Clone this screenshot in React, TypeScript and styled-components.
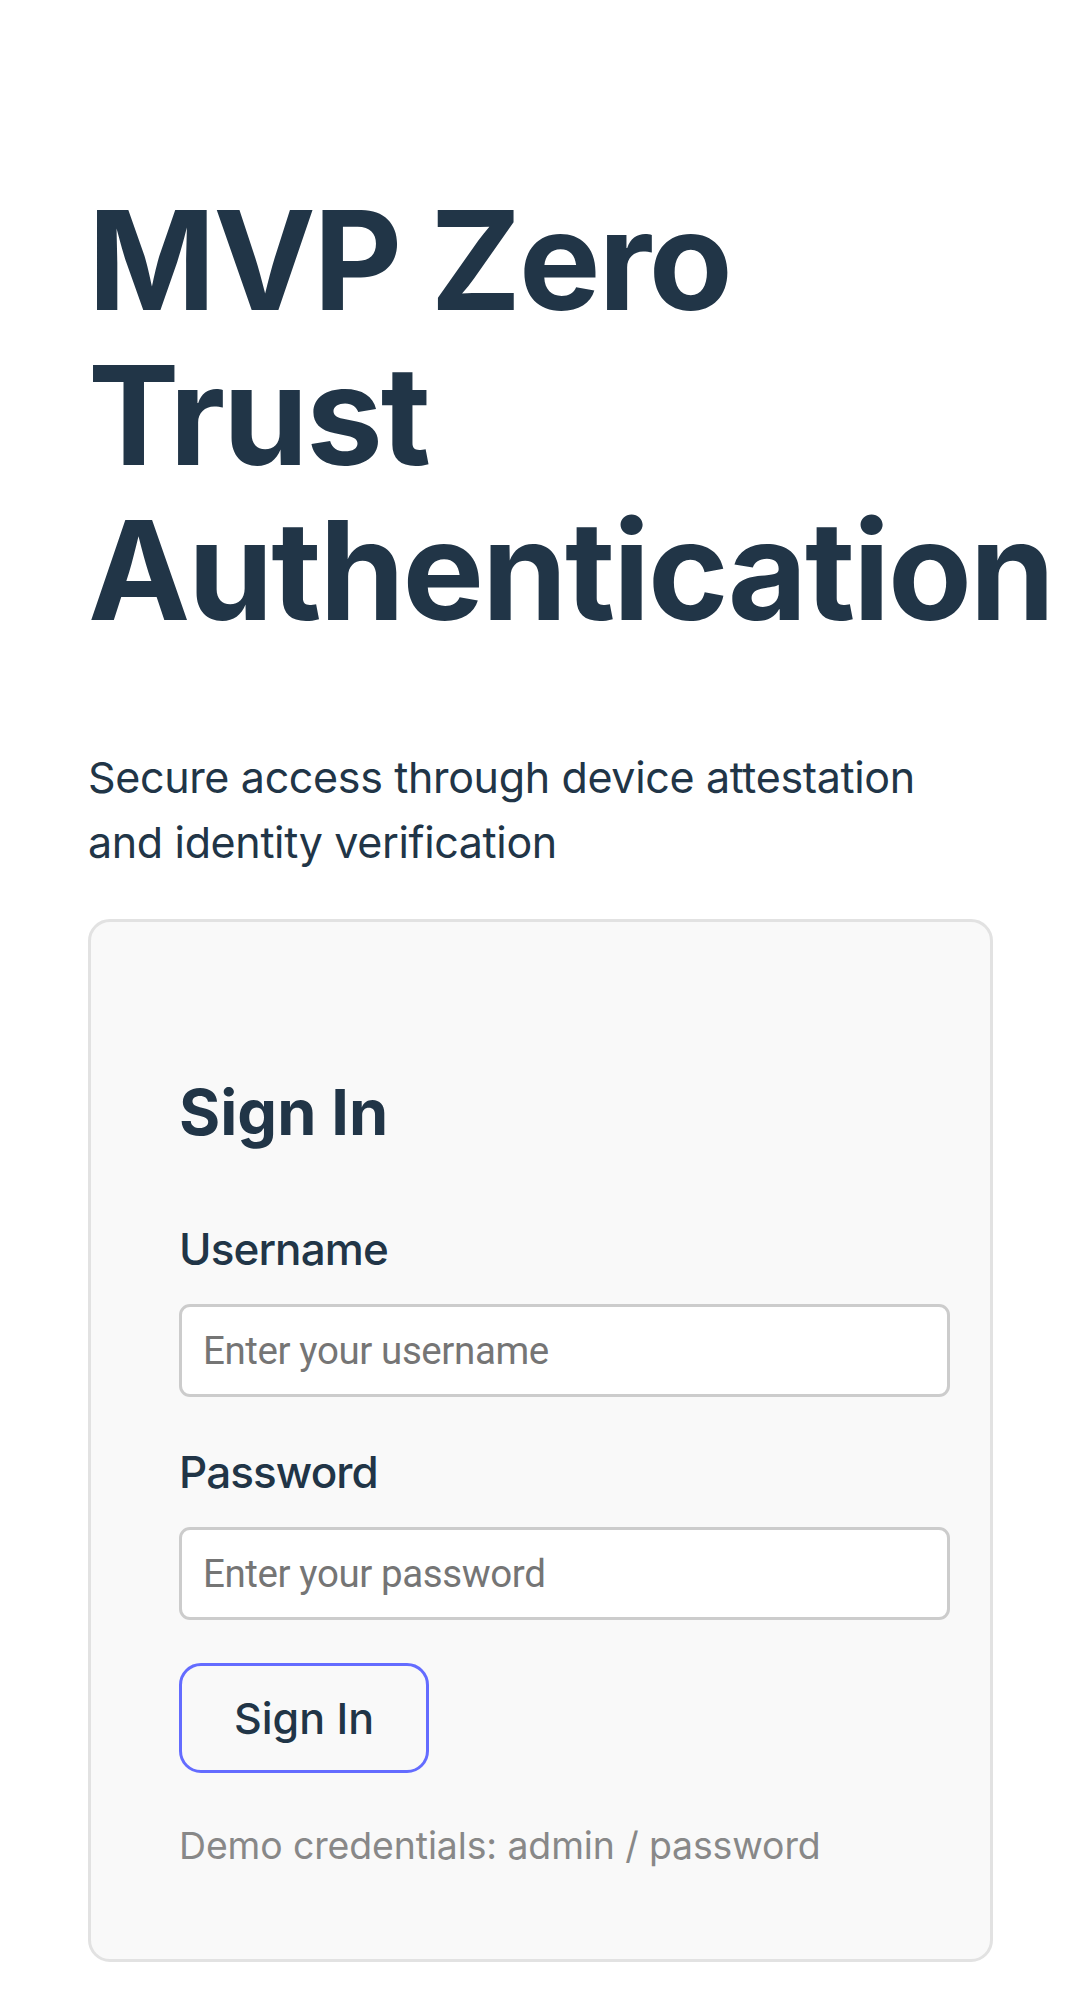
import React from 'react';
import styled, { createGlobalStyle } from 'styled-components';

const GlobalStyle = createGlobalStyle`
  html, body {
    margin: 0;
    padding: 0;
    background: #ffffff;
  }
  body {
    font-family: Inter, 'Liberation Sans', Arial, sans-serif;
    color: #213547;
    -webkit-font-smoothing: antialiased;
  }
  * {
    box-sizing: content-box;
  }
`;

const Page = styled.div`
  padding: 88px;
  padding-bottom: 40px;
`;

const Title = styled.h1`
  margin: 95px 0 0;
  font-size: 137px;
  line-height: 155px;
  font-weight: 700;
  letter-spacing: -2.2px;
  color: #213547;
`;

const Lead = styled.p`
  margin: 97px 0 0;
  max-width: 860px;
  font-size: 43px;
  line-height: 65px;
  font-weight: 400;
  letter-spacing: -0.35px;
`;

const Card = styled.div`
  margin-top: 44px;
  background: #f9f9f9;
  border: 3px solid #e2e2e2;
  border-radius: 22px;
  padding: 88px 88px 85px;
`;

const CardTitle = styled.h2`
  margin: 55px 0 0;
  font-size: 63px;
  line-height: 94px;
  font-weight: 700;
`;

const Form = styled.form`
  display: flex;
  flex-direction: column;
  align-items: flex-start;
  margin-top: 57px;
`;

const Field = styled.div<{ $last?: boolean }>`
  width: 100%;
  margin-bottom: ${(p) => (p.$last ? '0' : '42px')};
`;

const Label = styled.label`
  display: block;
  font-size: 44px;
  line-height: 66px;
  font-weight: 500;
  letter-spacing: -0.9px;
  margin-bottom: 22px;
`;

const Input = styled.input`
  display: block;
  width: 100%;
  margin: 0;
  padding: 21px;
  border: 3px solid #cccccc;
  border-radius: 11px;
  background: #ffffff;
  font-family: Roboto, 'Liberation Sans', Arial, sans-serif;
  font-size: 38.5px;
  letter-spacing: -0.4px;
  line-height: normal;
  color: #213547;
  outline: none;

  &::placeholder {
    color: #757575;
  }
`;

const Button = styled.button`
  margin-top: 43px;
  padding: 26px 52px;
  border: 3px solid #646cff;
  border-radius: 22px;
  background: #f9f9f9;
  font-family: Inter, 'Liberation Sans', Arial, sans-serif;
  font-size: 43px;
  font-weight: 500;
  line-height: normal;
  color: #213547;
  cursor: pointer;
`;

const Hint = styled.p`
  margin: 45px 0 0;
  font-size: 37.4px;
  line-height: 56px;
  letter-spacing: -0.1px;
  color: #888888;
`;

export default function App() {
  return (
    <>
      <GlobalStyle />
      <Page>
        <Title>MVP Zero Trust Authentication</Title>
        <Lead>Secure access through device attestation and identity verification</Lead>
        <Card>
          <CardTitle>Sign In</CardTitle>
          <Form onSubmit={(e) => e.preventDefault()}>
            <Field>
              <Label htmlFor="username">Username</Label>
              <Input id="username" type="text" placeholder="Enter your username" />
            </Field>
            <Field $last>
              <Label htmlFor="password">Password</Label>
              <Input id="password" type="password" placeholder="Enter your password" />
            </Field>
            <Button type="submit">Sign In</Button>
          </Form>
          <Hint>Demo credentials: admin / password</Hint>
        </Card>
      </Page>
    </>
  );
}
